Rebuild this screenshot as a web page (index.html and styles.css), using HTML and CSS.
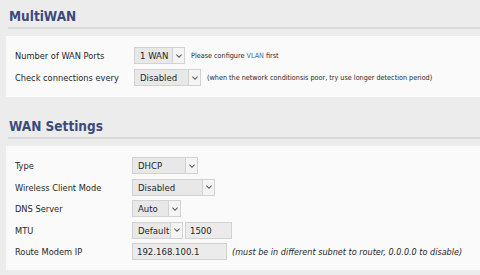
FILE: index.html
```html
<!DOCTYPE html>
<html lang="en">
<head>
    <meta charset="UTF-8">
    <meta name="viewport" content="width=device-width, initial-scale=1.0">
    <title>MultiWAN</title>
    <link rel="stylesheet" href="styles.css">
</head>
<body>
    <div class="section">
        <h2>MultiWAN</h2>
        <div class="panel">
            <div class="row">
                <label>Number of WAN Ports</label>
                <div class="select w-ports"><span class="val">1 WAN</span><span class="arrow"><svg viewBox="0 0 7 4"><path d="M0.5 0.5 L3.5 3.5 L6.5 0.5"/></svg></span></div>
                <span class="hint">Please configure <a href="#">VLAN</a> first</span>
            </div>
            <div class="row">
                <label>Check connections every</label>
                <div class="select w-check"><span class="val">Disabled</span><span class="arrow"><svg viewBox="0 0 7 4"><path d="M0.5 0.5 L3.5 3.5 L6.5 0.5"/></svg></span></div>
                <span class="hint">(when the network conditionsis poor, try use longer detection period)</span>
            </div>
        </div>
    </div>

    <div class="section">
        <h2>WAN Settings</h2>
        <div class="panel wan">
            <div class="row">
                <label>Type</label>
                <div class="select w-type"><span class="val">DHCP</span><span class="arrow"><svg viewBox="0 0 7 4"><path d="M0.5 0.5 L3.5 3.5 L6.5 0.5"/></svg></span></div>
            </div>
            <div class="row">
                <label>Wireless Client Mode</label>
                <div class="select w-wcm"><span class="val">Disabled</span><span class="arrow"><svg viewBox="0 0 7 4"><path d="M0.5 0.5 L3.5 3.5 L6.5 0.5"/></svg></span></div>
            </div>
            <div class="row">
                <label>DNS Server</label>
                <div class="select w-dns"><span class="val">Auto</span><span class="arrow"><svg viewBox="0 0 7 4"><path d="M0.5 0.5 L3.5 3.5 L6.5 0.5"/></svg></span></div>
            </div>
            <div class="row">
                <label>MTU</label>
                <div class="select w-mtu"><span class="val">Default</span><span class="arrow"><svg viewBox="0 0 7 4"><path d="M0.5 0.5 L3.5 3.5 L6.5 0.5"/></svg></span></div>
                <input type="text" class="field w-mtuval" value="1500">
            </div>
            <div class="row">
                <label>Route Modem IP</label>
                <input type="text" class="field w-ip" value="192.168.100.1">
                <span class="note">(must be in different subnet to router, 0.0.0.0 to disable)</span>
            </div>
        </div>
    </div>
</body>
</html>
```

FILE: styles.css
```css
body {
    margin: 0;
    padding: 0;
    background-color: #ececec;
    font-family: "DejaVu Sans Condensed", "DejaVu Sans", sans-serif;
    font-size: 9.2px;
    color: #262626;
    overflow: hidden;
}

.section {
    padding-left: 6px;
}

h2 {
    margin: 0 0 0 2px;
    padding: 8px 0 3px 1px;
    font-size: 13.5px;
    font-weight: bold;
    color: #3b4a7c;
    border-bottom: 2px solid #d9d9d9;
}

.panel {
    background-color: #fafafa;
    margin-top: 7px;
    padding: 11px 0 11px 9px;
    display: flex;
    flex-direction: column;
    gap: 5px;
}

.panel.wan {
    gap: 4.6px;
    padding-bottom: 10px;
}

.section + .section h2 {
    padding-top: 21px;
}

.row {
    display: flex;
    align-items: center;
    height: 17px;
}

.row label {
    width: 119px;
}

.wan .row label {
    width: 117px;
}

.select {
    display: flex;
    height: 17px;
    box-sizing: border-box;
    border: 1px solid #d2d2d2;
    background-color: #e8e8e8;
    font-size: 9.5px;
}

.select .val {
    flex: 1;
    padding-left: 5px;
    line-height: 15px;
}

.select .arrow {
    width: 11px;
    border-left: 1px solid #d2d2d2;
    background-color: #f4f4f4;
    display: flex;
    align-items: center;
    justify-content: center;
}

.select .arrow svg {
    width: 6px;
    height: 4px;
    fill: none;
    stroke: #555;
    stroke-width: 1.2;
}

.field {
    height: 17px;
    box-sizing: border-box;
    border: 1px solid #d2d2d2;
    background-color: #ebebeb;
    font-family: inherit;
    font-size: 9.5px;
    color: #262626;
    padding: 0 0 0 4px;
    margin: 0;
    outline: none;
}

.w-ports { width: 51px; }
.w-check { width: 67px; }
.w-type { width: 66px; }
.w-wcm { width: 83px; }
.w-dns { width: 49px; }
.w-mtu { width: 51px; }
.w-mtuval { width: 47px; margin-left: 2px; }
.w-ip { width: 95px; }

.hint {
    margin-left: 6px;
    font-size: 7.2px;
}

.hint a {
    color: #4a6aa8;
    text-decoration: none;
}

.note {
    margin-left: 5px;
    font-style: italic;
    font-size: 9px;
}
```
